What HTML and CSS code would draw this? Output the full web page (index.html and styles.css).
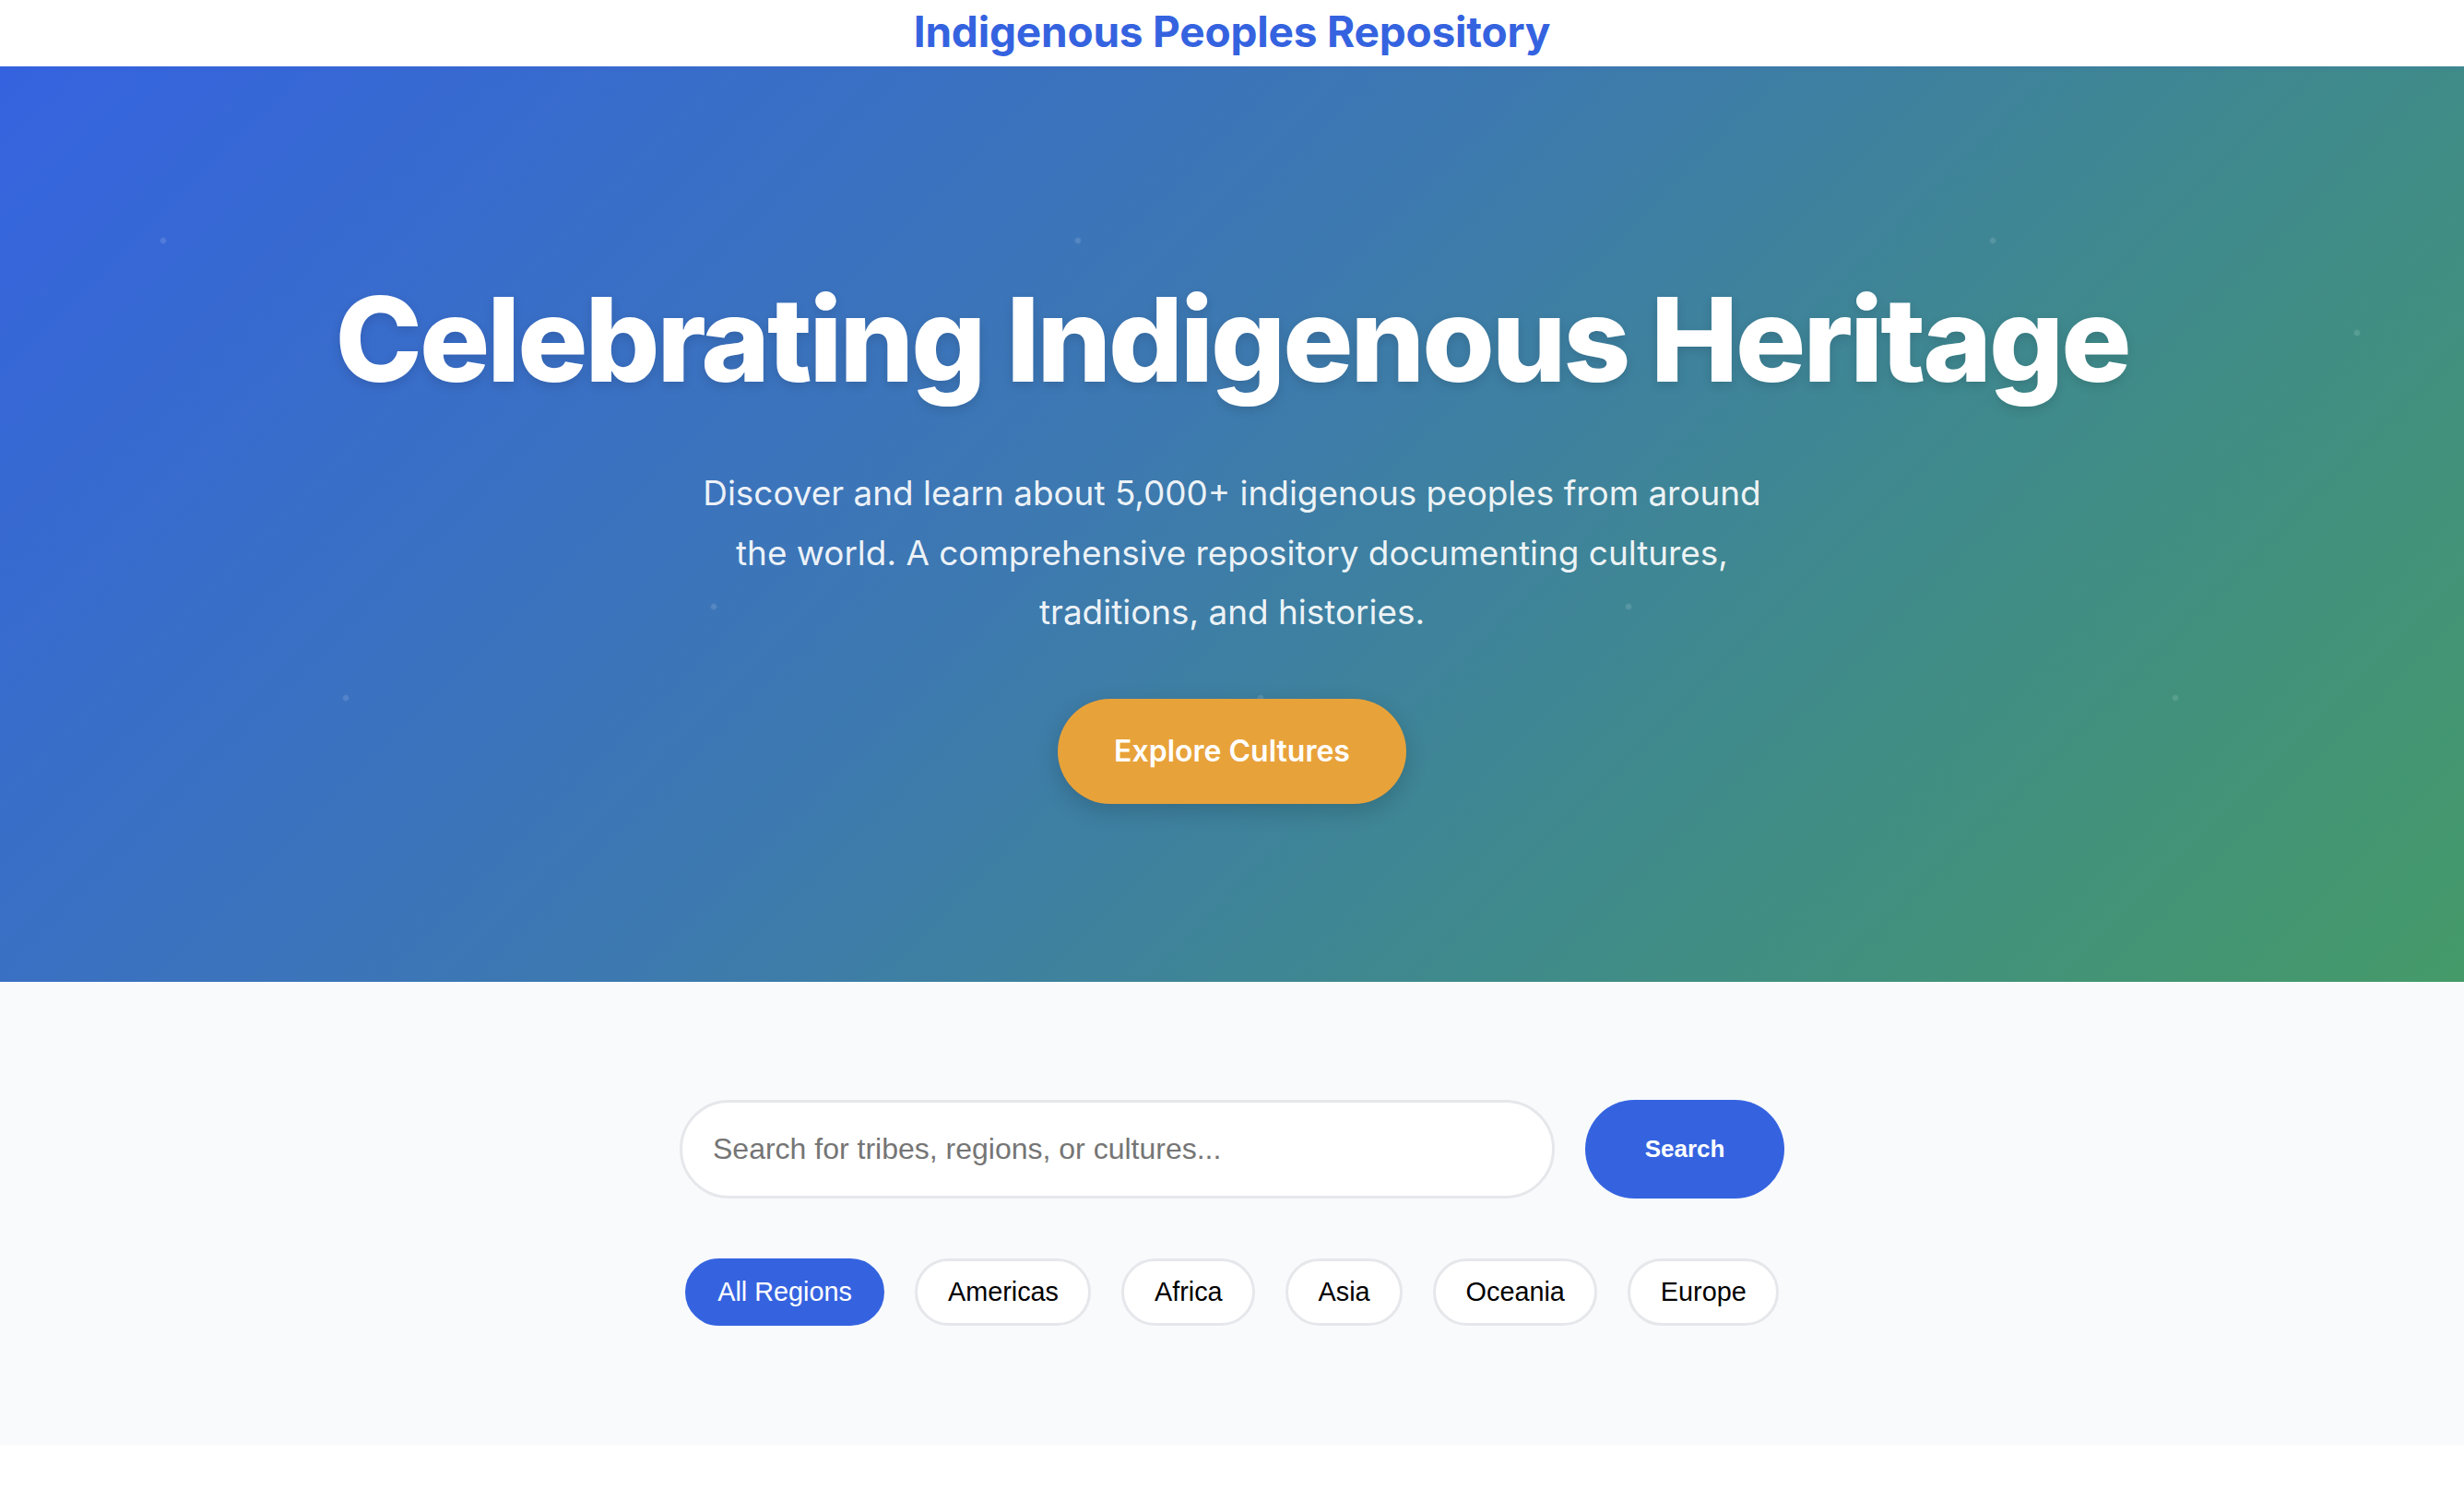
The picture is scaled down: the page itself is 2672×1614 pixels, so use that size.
FILE: index.html
```html
<!DOCTYPE html>
<html lang="en">
<head>
<meta charset="utf-8">
<title>Indigenous Peoples Repository</title>
<link rel="stylesheet" href="styles.css">
</head>
<body>
<header class="site-header">
  <div class="brand">Indigenous Peoples Repository</div>
</header>
<section class="hero">
  <h1 class="hero-title">Celebrating Indigenous Heritage</h1>
  <p class="hero-text">Discover and learn about 5,000+ indigenous peoples from around the world. A comprehensive repository documenting cultures, traditions, and histories.</p>
  <a class="hero-btn" href="#">Explore Cultures</a>
</section>
<section class="search-section">
  <div class="search-row">
    <input class="search-input" type="text" placeholder="Search for tribes, regions, or cultures...">
    <button class="search-btn">Search</button>
  </div>
  <div class="filters">
    <button class="chip active">All Regions</button>
    <button class="chip">Americas</button>
    <button class="chip">Africa</button>
    <button class="chip">Asia</button>
    <button class="chip">Oceania</button>
    <button class="chip">Europe</button>
  </div>
</section>
</body>
</html>
```

FILE: styles.css
```css
* { box-sizing: border-box; }
html, body { margin: 0; padding: 0; background: #ffffff; }
body { font-family: Inter, "Liberation Sans", Arial, sans-serif; }

.site-header {
  height: 72px;
  display: flex;
  align-items: center;
  justify-content: center;
  background: #ffffff;
  box-shadow: 0 2px 4px rgba(53, 99, 224, 0.18);
  position: relative;
  z-index: 2;
}
.brand {
  font-family: Inter, sans-serif;
  font-weight: 700;
  font-size: 46px;
  line-height: 60px;
  margin-top: -4px;
  color: #3563e0;
  letter-spacing: -0.2px;
}

.hero {
  height: 993px;
  padding-top: 218px;
  display: flex;
  flex-direction: column;
  align-items: center;
  text-align: center;
  color: #ffffff;
  background-color: #3c7aa8;
  background-image:
    radial-gradient(circle 4px at 177px 189px, rgba(255,255,255,0.13) 60%, transparent 100%),
    radial-gradient(circle 4px at 572px 289px, rgba(255,255,255,0.13) 60%, transparent 100%),
    radial-gradient(circle 4px at 375px 685px, rgba(255,255,255,0.13) 60%, transparent 100%),
    radial-gradient(circle 4px at 774px 586px, rgba(255,255,255,0.13) 60%, transparent 100%),
    linear-gradient(135deg, #3563e0 0%, #3d79b0 45%, #3f8a8c 70%, #459a69 100%);
  background-size: 992px 992px, 992px 992px, 992px 992px, 992px 992px, 100% 100%;
  background-repeat: repeat, repeat, repeat, repeat, no-repeat;
}
.hero-title {
  margin: 0;
  font-family: Inter, sans-serif;
  font-weight: 800;
  font-size: 127px;
  line-height: 156px;
  letter-spacing: -3px;
  text-shadow: 0 4px 12px rgba(0, 0, 0, 0.12);
}
.hero-text {
  margin: 57px 0 0;
  max-width: 1200px;
  font-family: Inter, sans-serif;
  font-weight: 400;
  font-size: 36.9px;
  line-height: 64.5px;
  color: rgba(255, 255, 255, 0.92);
}
.hero-btn {
  margin-top: 61px;
  width: 378px;
  height: 114px;
  border-radius: 57px;
  display: flex;
  align-items: center;
  justify-content: center;
  background: #e8a23a;
  color: #ffffff;
  text-decoration: none;
  font-family: Inter, sans-serif;
  font-weight: 600;
  font-size: 32px;
  box-shadow: 0 8px 24px rgba(0, 0, 0, 0.16);
}

.search-section {
  background: #f8fafc;
  padding: 128px 0 130px;
  display: flex;
  flex-direction: column;
  align-items: center;
}
.search-row {
  display: flex;
  gap: 33px;
}
.search-input {
  width: 949px;
  height: 107px;
  border: 3px solid #e5e7eb;
  border-radius: 54px;
  background: #ffffff;
  padding: 0 33px;
  font-family: "Liberation Sans", Arial, sans-serif;
  font-size: 32px;
  color: #111;
  outline: none;
}
.search-input::placeholder { color: #757575; }
.search-btn {
  width: 216px;
  height: 107px;
  border: none;
  border-radius: 54px;
  background: #3563e0;
  color: #ffffff;
  font-family: "Liberation Sans", Arial, sans-serif;
  font-weight: 700;
  font-size: 26px;
}
.filters {
  margin-top: 65px;
  display: flex;
  gap: 33px;
}
.chip {
  height: 73px;
  padding: 0 32.5px;
  border: 3px solid #e5e7eb;
  border-radius: 37px;
  background: #ffffff;
  color: #000000;
  font-family: "Liberation Sans", Arial, sans-serif;
  font-size: 28.8px;
}
.chip.active {
  background: #3563e0;
  border-color: #3563e0;
  color: #ffffff;
}
```
